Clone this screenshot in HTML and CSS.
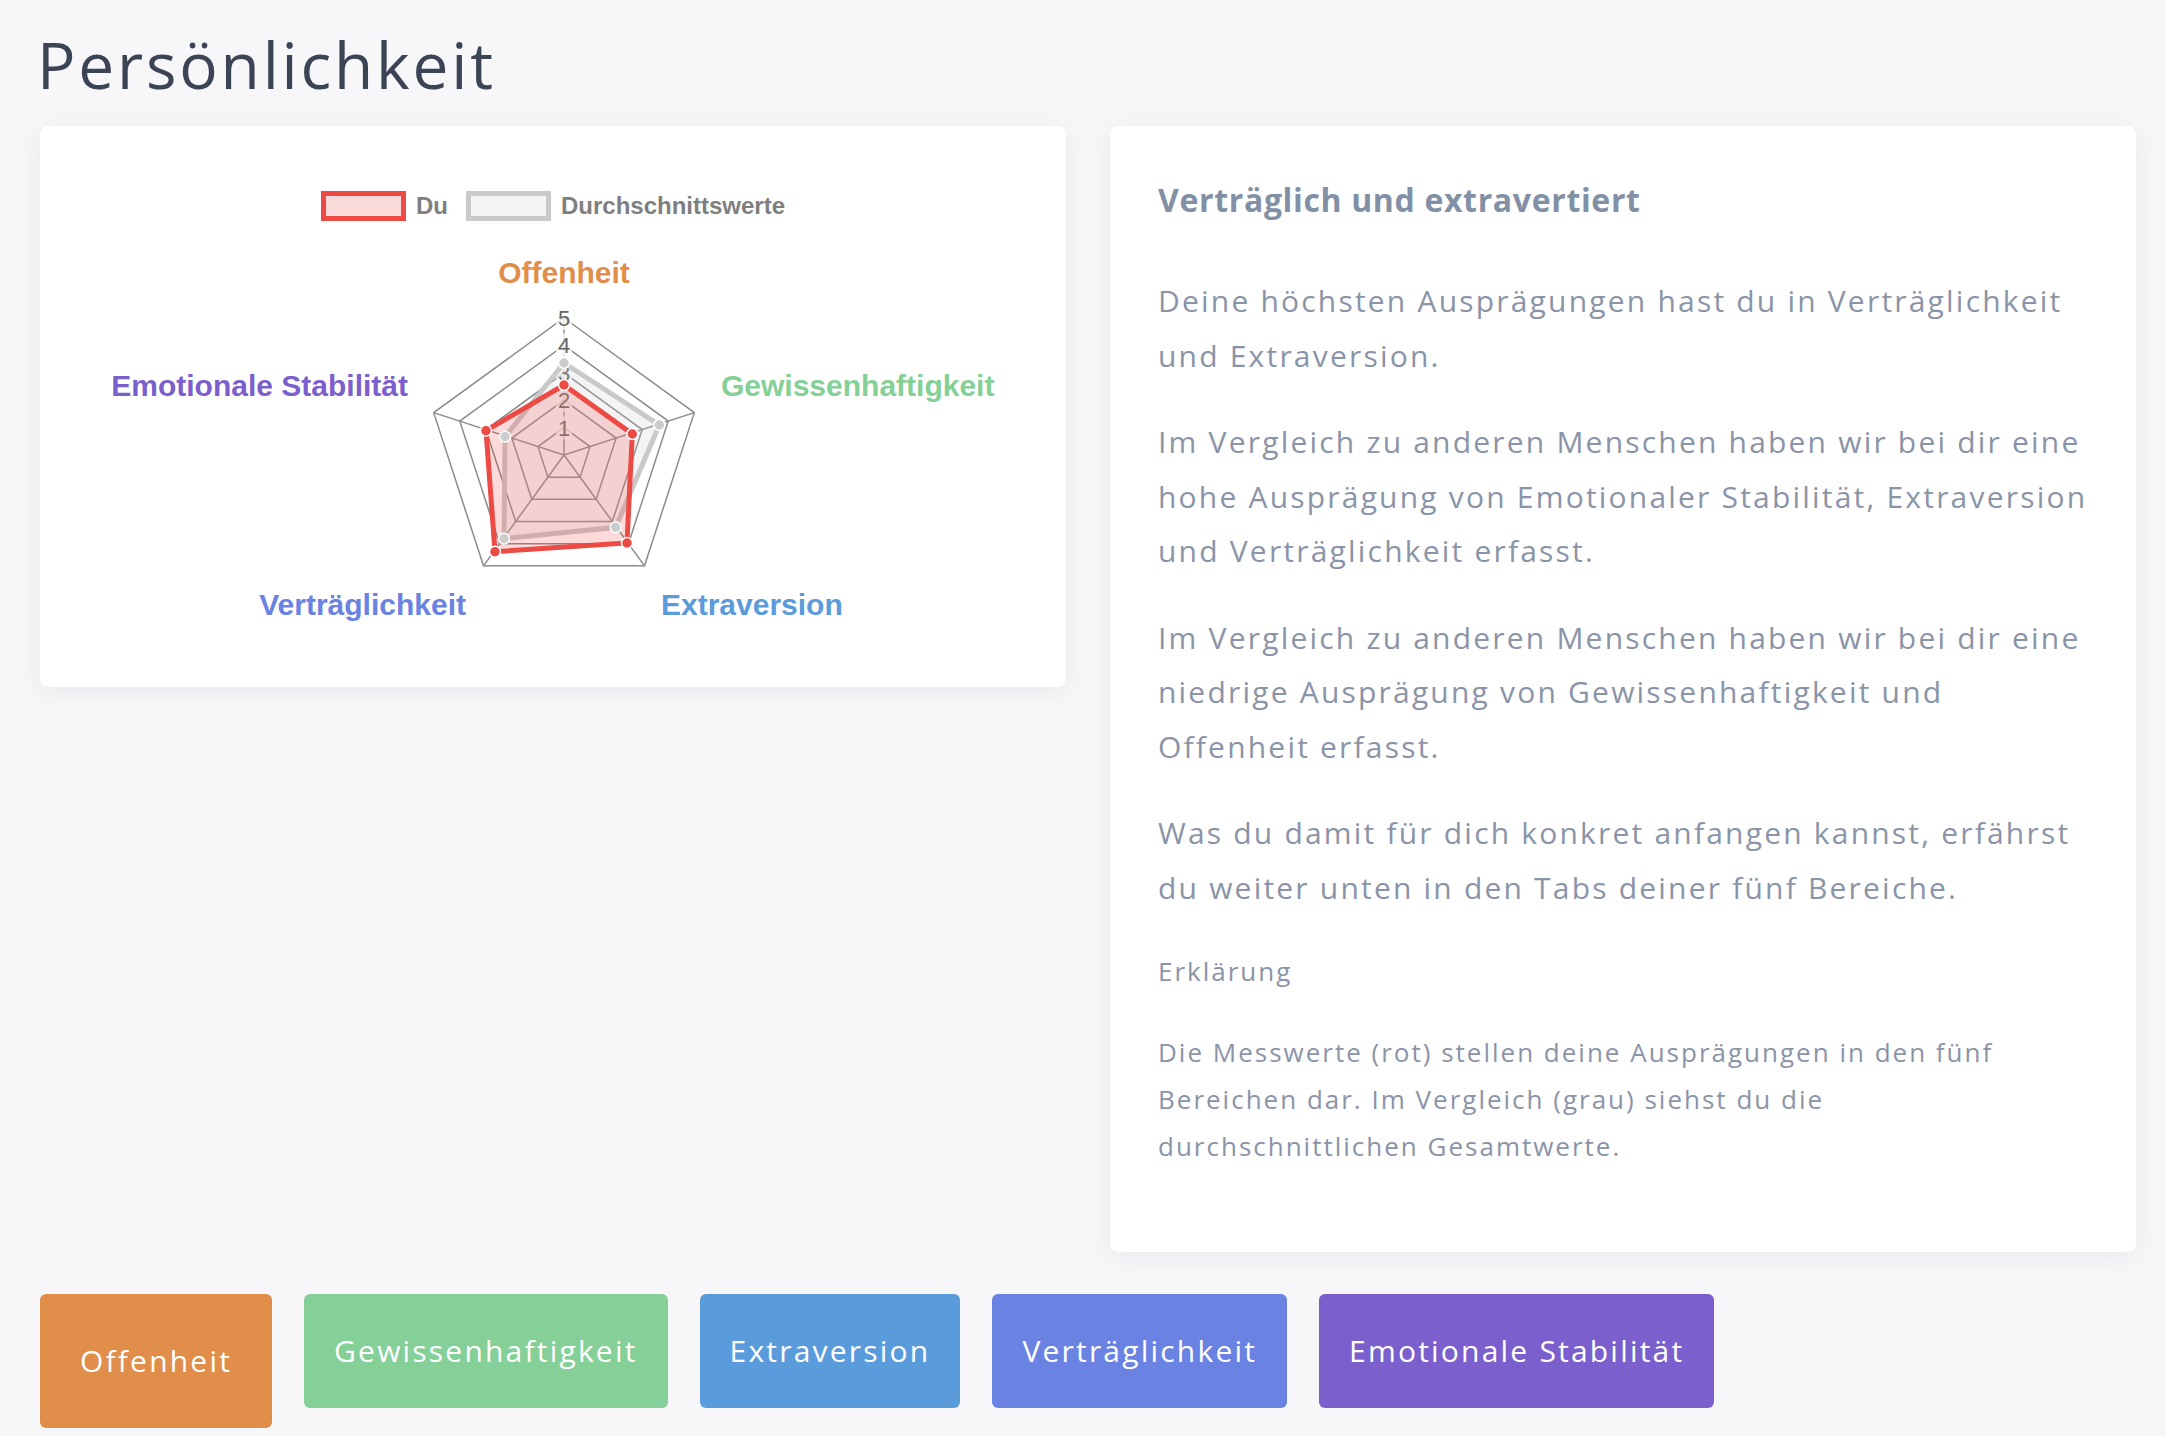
FILE: index.html
```html
<!DOCTYPE html>
<html lang="de">
<head>
<meta charset="utf-8">
<title>Persönlichkeit</title>
<link rel="stylesheet" href="styles.css">
</head>
<body>
<main class="page">
  <h1 class="page-title">Persönlichkeit</h1>
  <section class="cards">
    <div class="card chart-card">
      <div class="legend">
        <span class="legend-item"><span class="legend-box box-du"></span><span class="legend-label">Du</span></span>
        <span class="legend-item"><span class="legend-box box-avg"></span><span class="legend-label">Durchschnittswerte</span></span>
      </div>
      <svg class="radar" width="1026" height="466" viewBox="0 0 1026 466" xmlns="http://www.w3.org/2000/svg">
        <g class="grid" fill="none" stroke="#8b8b8b" stroke-width="1.5">
          <polygon points="524,206.6 550.06,225.53 540.11,256.17 507.89,256.17 497.94,225.53"/>
          <polygon points="524,179.2 576.12,217.07 556.21,278.33 491.79,278.33 471.88,217.07"/>
          <polygon points="524,151.8 602.18,208.6 572.32,300.5 475.68,300.5 445.82,208.6"/>
          <polygon points="524,124.4 628.24,200.13 588.42,322.67 459.58,322.67 419.76,200.13"/>
          <polygon points="524,97 654.3,191.66 604.53,344.84 443.47,344.84 393.7,191.66"/>
          <line x1="524" y1="234" x2="524" y2="97"/>
          <line x1="524" y1="234" x2="654.3" y2="191.66"/>
          <line x1="524" y1="234" x2="604.53" y2="344.84"/>
          <line x1="524" y1="234" x2="443.47" y2="344.84"/>
          <line x1="524" y1="234" x2="393.7" y2="191.66"/>
        </g>
        <g class="ticks">
          <rect x="516" y="194.6" width="16" height="24" fill="rgba(255,255,255,0.75)"/>
          <rect x="516" y="167.2" width="16" height="24" fill="rgba(255,255,255,0.75)"/>
          <rect x="516" y="139.8" width="16" height="24" fill="rgba(255,255,255,0.75)"/>
          <rect x="516" y="112.4" width="16" height="24" fill="rgba(255,255,255,0.75)"/>
          <rect x="516" y="85" width="16" height="24" fill="rgba(255,255,255,0.75)"/>
          <text x="524" y="214.5">1</text>
          <text x="524" y="187.1">2</text>
          <text x="524" y="159.7">3</text>
          <text x="524" y="132.3">4</text>
          <text x="524" y="104.9">5</text>
        </g>
        <polygon class="ds-avg" points="524,142 619.3,204 575.7,306.3 464,317.7 465,215.7"/>
        <polygon class="ds-du" points="524,164 592.3,213 587,322 455,330.7 446,209.7"/>
        <g class="pts-avg">
          <circle cx="524" cy="142" r="5.5"/>
          <circle cx="619.3" cy="204" r="5.5"/>
          <circle cx="575.7" cy="306.3" r="5.5"/>
          <circle cx="464" cy="317.7" r="5.5"/>
          <circle cx="465" cy="215.7" r="5.5"/>
        </g>
        <g class="pts-du">
          <circle cx="524" cy="164" r="5.5"/>
          <circle cx="592.3" cy="213" r="5.5"/>
          <circle cx="587" cy="322" r="5.5"/>
          <circle cx="455" cy="330.7" r="5.5"/>
          <circle cx="446" cy="209.7" r="5.5"/>
        </g>
        <g class="axis-labels">
          <text class="lbl-o" x="524" y="62" text-anchor="middle">Offenheit</text>
          <text class="lbl-g" x="681" y="175" text-anchor="start">Gewissenhaftigkeit</text>
          <text class="lbl-e" x="621" y="394" text-anchor="start">Extraversion</text>
          <text class="lbl-v" x="426" y="394" text-anchor="end">Verträglichkeit</text>
          <text class="lbl-s" x="368" y="175" text-anchor="end">Emotionale Stabilität</text>
        </g>
      </svg>
    </div>
    <div class="card text-card">
      <h2 class="card-heading">Verträglich und extravertiert</h2>
      <p class="text">Deine höchsten Ausprägungen hast du in Verträglichkeit und Extraversion.</p>
      <p class="text">Im Vergleich zu anderen Menschen haben wir bei dir eine hohe Ausprägung von Emotionaler Stabilität, Extraversion und Verträglichkeit erfasst.</p>
      <p class="text">Im Vergleich zu anderen Menschen haben wir bei dir eine niedrige Ausprägung von Gewissenhaftigkeit und Offenheit erfasst.</p>
      <p class="text">Was du damit für dich konkret anfangen kannst, erfährst du weiter unten in den Tabs deiner fünf Bereiche.</p>
      <p class="note-title">Erklärung</p>
      <p class="note">Die Messwerte (rot) stellen deine Ausprägungen in den fünf Bereichen dar. Im Vergleich (grau) siehst du die durchschnittlichen Gesamtwerte.</p>
    </div>
  </section>
  <nav class="tabs">
    <button class="tab tab-o active">Offenheit</button>
    <button class="tab tab-g">Gewissenhaftigkeit</button>
    <button class="tab tab-e">Extraversion</button>
    <button class="tab tab-v">Verträglichkeit</button>
    <button class="tab tab-s">Emotionale Stabilität</button>
  </nav>
</main>
</body>
</html>
```
FILE: styles.css
```css
* { box-sizing: border-box; }

html, body {
  margin: 0;
  padding: 0;
  background: #f7f7f9;
}

body {
  font-family: "Open Sans", "Noto Sans", sans-serif;
  height: 1436px;
  overflow: hidden;
}

.page {
  padding: 26px 30px 0 40px;
}

.page-title {
  margin: 0 0 23px -3px;
  font-size: 64px;
  line-height: 77px;
  font-weight: 400;
  letter-spacing: 2.8px;
  color: #3b4454;
}

.cards {
  display: grid;
  grid-template-columns: 1026px 1026px;
  column-gap: 44px;
  align-items: start;
}

.card {
  background: #fff;
  border-radius: 8px;
  box-shadow: 0 4px 26px rgba(40, 40, 90, 0.07);
}

.chart-card {
  height: 561px;
  padding-top: 65px;
}

.legend {
  display: flex;
  justify-content: center;
  gap: 18px;
  height: 30px;
  font-family: "Liberation Sans", Arial, sans-serif;
  font-weight: 700;
  font-size: 24px;
  line-height: 30px;
  color: #7f7f7f;
}

.legend-item {
  display: flex;
  align-items: center;
  gap: 10px;
}

.legend-box {
  display: block;
  width: 85px;
  height: 30px;
  border: 5px solid;
}

.box-du {
  border-color: #eb4a45;
  background: #fbdada;
}

.box-avg {
  border-color: #c9c9c9;
  background: #f4f4f4;
}

.radar {
  display: block;
}

.ticks text {
  font-family: "Liberation Sans", Arial, sans-serif;
  font-size: 22px;
  fill: #666;
  text-anchor: middle;
}

.ds-avg {
  fill: rgba(200, 200, 200, 0.2);
  stroke: #c9c9c9;
  stroke-width: 5;
  stroke-linejoin: miter;
}

.ds-du {
  fill: rgba(239, 68, 68, 0.2);
  stroke: #eb4a45;
  stroke-width: 5;
  stroke-linejoin: miter;
}

.pts-avg circle {
  fill: #cdcdcd;
  stroke: #fff;
  stroke-width: 1.5;
}

.pts-du circle {
  fill: #eb4a45;
  stroke: #fff;
  stroke-width: 1.5;
}

.axis-labels text {
  font-family: "Liberation Sans", Arial, sans-serif;
  font-weight: 700;
  font-size: 30px;
}

.lbl-o { fill: #e08e4a; }
.lbl-g { fill: #84d096; }
.lbl-e { fill: #5a9bdc; }
.lbl-v { fill: #6a82e2; }
.lbl-s { fill: #7b5fcc; }

.text-card {
  padding: 48px 40px 82px 48px;
  color: #8a94a8;
}

.card-heading {
  margin: 0 0 48px;
  font-size: 32px;
  line-height: 52px;
  font-weight: 700;
  letter-spacing: 0.65px;
  color: #8290a6;
}

.text {
  margin: 0 0 32px;
  font-size: 30px;
  line-height: 54.5px;
  letter-spacing: 2.2px;
}

.note-title {
  margin: 33px 0 34px;
  font-size: 26px;
  line-height: 47px;
  letter-spacing: 2px;
}

.note {
  margin: 0;
  max-width: 870px;
  font-size: 26px;
  line-height: 47px;
  letter-spacing: 2px;
}

.tabs {
  display: flex;
  align-items: flex-start;
  gap: 32px;
  margin-top: 42px;
}

.tab {
  border: 0;
  border-radius: 6px;
  padding: 30px;
  font-family: "Open Sans", "Noto Sans", sans-serif;
  font-size: 30px;
  line-height: 54px;
  letter-spacing: 2.2px;
  color: #fff;
  cursor: pointer;
}

.tab.active {
  padding: 40px;
}

.tab-o { background: #e08e4a; }
.tab-g { background: #85d098; }
.tab-e { background: #5a9bdc; }
.tab-v { background: #6a82e2; }
.tab-s { background: #7b5fcc; }
```
